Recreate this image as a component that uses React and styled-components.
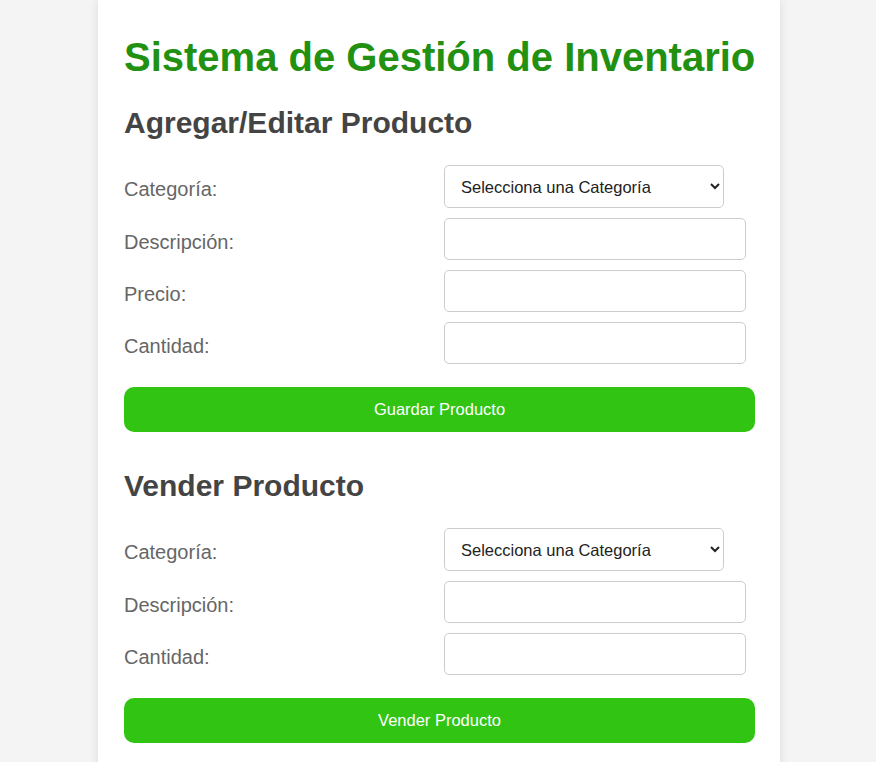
import React from "react";
import styled, { createGlobalStyle } from "styled-components";

const GlobalStyle = createGlobalStyle`
  html, body {
    margin: 0;
    padding: 0;
    background: #f4f4f4;
    font-family: "Liberation Sans", Arial, sans-serif;
  }
  * { box-sizing: border-box; }
`;

const Container = styled.div`
  width: 682px;
  margin-left: calc(50% - 340px);
  padding: 34px 25px 40px 26px;
  background: #ffffff;
  box-shadow: 0 0 10px rgba(0, 0, 0, 0.1);
  min-height: 800px;
`;

const Title = styled.h1`
  margin: 0 0 25px;
  font-size: 40px;
  line-height: 46px;
  font-weight: bold;
  white-space: nowrap;
  color: #229111;
`;

const Section = styled.section`
  margin-top: ${(p) => (p.$first ? "0" : "36px")};
`;

const Heading = styled.h2`
  margin: 0 0 25px;
  font-size: 30px;
  line-height: 35px;
  font-weight: bold;
  color: #444444;
`;

const Row = styled.div`
  display: flex;
  align-items: center;
  margin-bottom: 10px;
`;

const Label = styled.label`
  width: 320px;
  padding-top: 6px;
  font-size: 20px;
  line-height: 23px;
  color: #666666;
`;

const Select = styled.select`
  width: 280px;
  height: 43px;
  padding: 0 12px;
  border: 1px solid #cccccc;
  border-radius: 5px;
  background: #ffffff;
  font-family: "Liberation Sans", Arial, sans-serif;
  font-size: 16.5px;
  color: #222;
`;

const Input = styled.input`
  width: 302px;
  height: 42px;
  padding: 0 10px;
  border: 1px solid #cccccc;
  border-radius: 5px;
  background: #ffffff;
  font-family: "Liberation Sans", Arial, sans-serif;
  font-size: 16px;
`;

const Button = styled.button`
  display: block;
  width: 100%;
  height: 45px;
  margin-top: 23px;
  border: none;
  border-radius: 10px;
  background: #31c413;
  color: #ffffff;
  font-family: "Liberation Sans", Arial, sans-serif;
  font-size: 16.5px;
  cursor: pointer;
`;

function CategoryRow() {
  return (
    <Row>
      <Label>Categoría:</Label>
      <Select defaultValue="">
        <option value="">Selecciona una Categoría</option>
      </Select>
    </Row>
  );
}

function InputRow({ label, type = "text" }) {
  return (
    <Row>
      <Label>{label}</Label>
      <Input type={type} />
    </Row>
  );
}

export default function App() {
  return (
    <>
      <GlobalStyle />
      <Container>
        <Title>Sistema de Gestión de Inventario</Title>
        <Section $first>
          <Heading>Agregar/Editar Producto</Heading>
          <CategoryRow />
          <InputRow label="Descripción:" />
          <InputRow label="Precio:" />
          <InputRow label="Cantidad:" />
          <Button>Guardar Producto</Button>
        </Section>
        <Section>
          <Heading>Vender Producto</Heading>
          <CategoryRow />
          <InputRow label="Descripción:" />
          <InputRow label="Cantidad:" />
          <Button>Vender Producto</Button>
        </Section>
      </Container>
    </>
  );
}
